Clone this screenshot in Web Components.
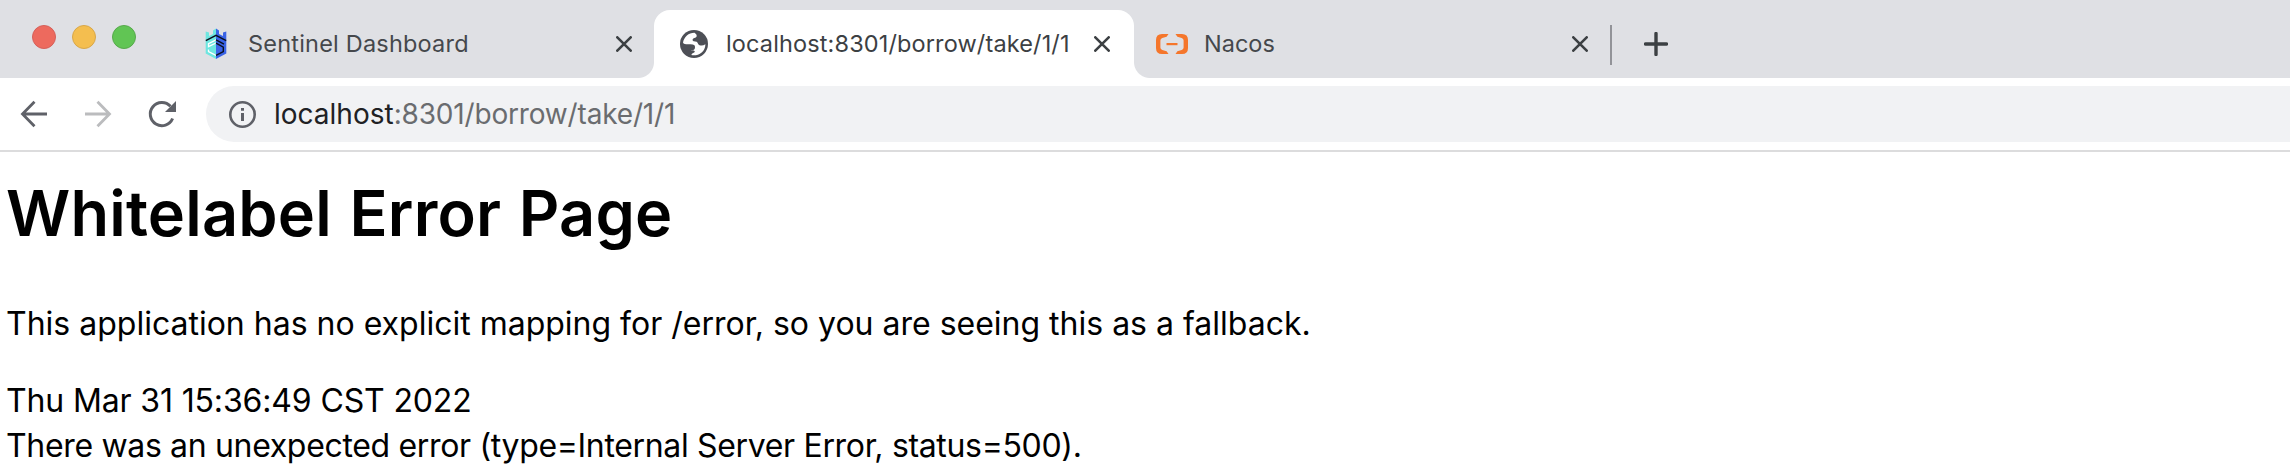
<!DOCTYPE html>
<html lang="en">
<head>
<meta charset="utf-8">
<title>localhost:8301/borrow/take/1/1</title>
<style>
  html, body { margin: 0; height: 100%; overflow: hidden; background: #fff; }
  body { font-family: Inter, "Liberation Sans", sans-serif; }
</style>
</head>
<body>
<browser-window>
  <tab-strip slot="tabs">
    <browser-tab style="--tracking:.2px;margin-right:-2px"><icon-sentinel slot="icon"></icon-sentinel>Sentinel Dashboard</browser-tab>
    <browser-tab active style="--tracking:.13px"><icon-globe slot="icon"></icon-globe>localhost:8301/borrow/take/1/1</browser-tab>
    <browser-tab style="margin-left:-2px"><icon-nacos slot="icon"></icon-nacos>Nacos</browser-tab>
  </tab-strip>
  <nav-bar slot="nav"><span slot="host">localhost</span><span slot="path">:8301/borrow/take/1/1</span></nav-bar>
  <error-page>
    <span slot="title">Whitelabel Error Page</span>
    <span slot="message">This application has no explicit mapping for /error, so you are seeing this as a fallback.</span>
    <span slot="date">Thu Mar 31 15:36:49 CST 2022</span>
    <span slot="detail">There was an unexpected error (type=Internal Server Error, status=500).</span>
  </error-page>
</browser-window>
<script>
const define = (name, html) => {
  const t = document.createElement('template');
  t.innerHTML = html;
  customElements.define(name, class extends HTMLElement {
    constructor() {
      super();
      this.attachShadow({ mode: 'open' }).append(t.content.cloneNode(true));
    }
  });
};

define('icon-sentinel', `<style>:host{display:block;width:32px;height:32px}svg{display:block}</style>
<svg width="32" height="32" viewBox="0 0 32 32">
  <path d="M16 .5L13 2.500V6L9 8V4.500L5.700 3.500V25.500L16 31Z" fill="#6ee6e0"/>
  <path d="M16 .5L19 2.500V6L23 8V4.500L26.300 3.500V25.500L16 31Z" fill="#3a63e6"/>
  <path d="M5.800 12.700L16 7.400L26.200 12.700" fill="none" stroke="#0b1020" stroke-width="1.500"/>
  <path d="M16 11.800L8.500 15.700V18.700L16 15M8.500 21.500V23.500L16 27.300" fill="none" stroke="#fff" stroke-width="1.300"/>
  <path d="M16 11.800L24 16.200M16 15.200L23.300 19.200V23.500L16 27.300" fill="none" stroke="#0b1020" stroke-width="1.400"/>
</svg>`);

define('icon-globe', `<style>:host{display:block;width:32px;height:32px}svg{display:block}</style>
<svg width="32" height="32" viewBox="0 0 32 32">
  <circle cx="16" cy="16" r="14" fill="#4d4f56"/>
  <path d="M16.500 4.700C10.800 4.600 6 8.800 5 14.600C5.500 16.600 9 16.300 12.500 16.300C16 16.300 17 17.200 17 19C17 20.500 16.600 21.800 15.400 21.900H13.200V22.200C15 22.200 17 22.500 16.800 23.800C16.500 25 13.800 25 13.300 27.100C19.500 28.500 27.400 24.500 27.400 16.200C25.500 17.600 23.500 18 21.500 17.200C19.800 16.500 20 14.300 18.600 13.800C16.500 13.300 14.700 13.700 14.600 12C14.600 9.500 18 10 18.600 8.400C19 7 18.300 6 16.500 4.700Z" fill="#fff"/>
</svg>`);

define('icon-nacos', `<style>:host{display:block;width:32px;height:32px}svg{display:block}</style>
<svg width="32" height="32" viewBox="0 0 32 32" fill="#f5762b">
  <path d="M12.500 6H6Q0 6 0 12V20Q0 26 6 26H12.500L10.600 23.200L6.300 21.900Q4.400 21.300 4.400 19.500V12.500Q4.400 10.700 6.300 10.100L10.600 8.800Z"/>
  <path d="M19.500 6H26Q32 6 32 12V20Q32 26 26 26H19.500L21.400 23.200L25.700 21.900Q27.600 21.300 27.600 19.500V12.500Q27.600 10.700 25.700 10.100L21.400 8.800Z"/>
  <rect x="10.500" y="15" width="11" height="2.200"/>
</svg>`);

define('browser-tab', `<style>
  :host{display:flex;align-items:center;box-sizing:border-box;width:480px;height:68px;padding:0 24px;position:relative;flex:none;color:#45484c;font-size:23.500px}
  :host([active]){background:#fff;border-radius:16px 16px 0 0;color:#3c4043}
  :host([active])::before,:host([active])::after{content:"";position:absolute;bottom:0;width:16px;height:16px}
  :host([active])::before{left:-16px;background:radial-gradient(circle at 0 0,transparent 15.500px,#fff 16.500px)}
  :host([active])::after{right:-16px;background:radial-gradient(circle at 100% 0,transparent 15.500px,#fff 16.500px)}
  .t{margin-left:16px;flex:1;white-space:nowrap;line-height:32px;letter-spacing:var(--tracking,0)}
  svg{display:block;flex:none}
</style>
<slot name="icon"></slot><div class="t"><slot></slot></div>
<svg width="16" height="16" viewBox="0 0 16 16"><path d="M1.300 1.300L14.700 14.700M14.700 1.300L1.300 14.700" stroke="#3c4043" stroke-width="2.600" stroke-linecap="round"/></svg>`);

define('tab-strip', `<style>
  :host{display:flex;flex:none;box-sizing:border-box;height:78px;padding:10px 0 0 32px;background:#dfe0e4}
  .lights{display:flex;gap:16px;width:144px;padding-top:15px;flex:none}
  .lights i{width:24px;height:24px;border-radius:50%;box-sizing:border-box}
  .lights i:nth-child(1){background:#ed6a5e;border:1px solid #d5605a}
  .lights i:nth-child(2){background:#f4be4f;border:1px solid #d8a74a}
  .lights i:nth-child(3){background:#61c554;border:1px solid #57a94c}
  .sep{width:2px;height:40px;margin:15px 0 0 -2px;background:#929398;flex:none}
  .plus{margin:22px 0 0 32px;flex:none}
</style>
<div class="lights"><i></i><i></i><i></i></div><slot></slot><div class="sep"></div>
<svg class="plus" width="24" height="24" viewBox="0 0 24 24"><path d="M12 1.500V22.500M1.500 12H22.500" stroke="#3c4043" stroke-width="3.400" stroke-linecap="round"/></svg>`);

define('nav-bar', `<style>
  :host{display:flex;flex:none;align-items:center;box-sizing:border-box;height:74px;padding:0 0 0 18px;border-bottom:2px solid #dcdcdd;background:#fff}
  svg{display:block;flex:none}
  .fwd{margin-left:32px}.rel{margin-left:32px}
  .box{display:flex;align-items:center;flex:1;height:56px;margin-left:28px;padding-left:20px;border-radius:28px 0 0 28px;background:#f1f2f4}
  .url{margin-left:16px;font-size:28px;line-height:40px;white-space:nowrap;color:#6a6c6f;letter-spacing:-.17px}
  .h{color:#202124;letter-spacing:0}
</style>
<svg width="32" height="32" viewBox="0 0 32 32" fill="none" stroke="#5f6168" stroke-width="2.800"><path d="M29 16H5M16.500 3.800L4.500 16L16.500 28.200"/></svg>
<svg class="fwd" width="32" height="32" viewBox="0 0 32 32" fill="none" stroke="#bbbcbe" stroke-width="2.800"><path d="M3 16H27M15.500 3.800L27.500 16L15.500 28.200"/></svg>
<svg class="rel" width="32" height="32" viewBox="0 0 32 32"><path d="M26.600 20.500A11.600 11.600 0 1 1 24.500 8.300" fill="none" stroke="#5f6168" stroke-width="3"/><path d="M30 3V14H19Z" fill="#5f6168"/></svg>
<div class="box">
<svg width="32" height="32" viewBox="0 0 32 32"><circle cx="16.500" cy="16.500" r="12.200" fill="none" stroke="#5f6168" stroke-width="2.600"/><path d="M15 10H18V12.800H15ZM15 15H18V23H15Z" fill="#5f6168"/></svg>
<div class="url"><span class="h"><slot name="host"></slot></span><slot name="path"></slot></div>
</div>`);

define('error-page', `<style>
  :host{display:block;flex:none;padding:17px 6px 0;color:#000;font-size:32px;line-height:45px;white-space:nowrap}
  h1{margin:0;font-size:63px;line-height:88px;font-weight:600;letter-spacing:.2px;word-spacing:1.500px}
  p{margin:44px 0 32px}
  .date{letter-spacing:-.14px}
  .detail{letter-spacing:-.335px}
</style>
<h1><slot name="title"></slot></h1>
<p><slot name="message"></slot></p>
<div class="date"><slot name="date"></slot></div>
<div class="detail"><slot name="detail"></slot></div>`);

define('browser-window', `<style>:host{display:flex;flex-direction:column;height:464px;overflow:hidden}</style>
<slot name="tabs"></slot><slot name="nav"></slot><slot></slot>`);
</script>
</body>
</html>
